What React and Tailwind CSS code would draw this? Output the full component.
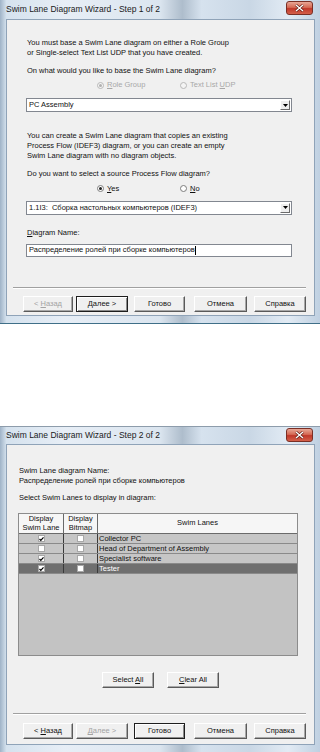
import React from 'react'

const U = ({ children }) => <span className="underline">{children}</span>

const Btn = ({ children, w = 'w-[51px]', ml = '', def = false, disabled = false }) => (
  <div
    className={`${w} ${ml} h-[16px] shrink-0 flex items-center justify-center text-[7.5px] leading-none bg-[#f0f0f0] ${
      def
        ? 'border border-[#1e1e1e] shadow-[inset_1px_1px_0_#ffffff,inset_-1px_-1px_0_#8a8a8a]'
        : 'border border-t-[#ffffff] border-l-[#ffffff] border-r-[#5a5a5a] border-b-[#5a5a5a] shadow-[inset_-1px_-1px_0_#a8a8a8]'
    } ${disabled ? 'text-[#a3a3a3]' : 'text-[#111]'}`}
  >
    <span className="whitespace-pre">{children}</span>
  </div>
)

const Radio = ({ checked = false, disabled = false, w, children }) => (
  <div className={`${w} flex items-center h-[10px]`}>
    <div
      className={`w-[7px] h-[7px] rounded-full border flex items-center justify-center ${
        disabled ? 'border-[#b8b8b8] bg-[#f4f4f4]' : 'border-[#7d7d7d] bg-white'
      }`}
    >
      {checked && (
        <div className={`w-[3px] h-[3px] rounded-full ${disabled ? 'bg-[#b0b0b0]' : 'bg-[#222]'}`} />
      )}
    </div>
    <span className={`ml-[3px] text-[7.5px] ${disabled ? 'text-[#a8a8a8]' : 'text-[#111]'}`}>{children}</span>
  </div>
)

const Combo = ({ value, mt }) => (
  <div className={`${mt} ml-[19px] w-[266px] h-[14px] bg-white border border-[#828790] flex items-center`}>
    <span className="flex-1 pl-[2px] text-[7.5px] text-[#111] truncate whitespace-pre">{value}</span>
    <div className="w-[10px] h-[10px] mr-[1px] bg-[#eeeeee] border border-t-white border-l-white border-r-[#6b6b6b] border-b-[#6b6b6b] flex items-center justify-center">
      <svg width="5" height="3" viewBox="0 0 5 3">
        <path d="M0 0h5L2.5 3z" fill="#000" />
      </svg>
    </div>
  </div>
)

const Check = ({ on }) => (
  <div className="w-[7px] h-[7px] bg-white border border-[#a8a8a8] flex items-center justify-center">
    {on && (
      <svg width="6" height="6" viewBox="0 0 6 6">
        <path d="M0.6 3l1.6 1.7L5.4 1" stroke="#000" strokeWidth="1.4" fill="none" />
      </svg>
    )}
  </div>
)

const Separator = ({ mt }) => (
  <div className={`${mt} ml-[6px] mr-[8px] border-t border-[#a0a0a0] border-b border-b-white`} />
)

const TitleBar = ({ h, title }) => (
  <div className={`${h} flex items-start shrink-0`}>
    <span className="pl-[6px] flex-1 text-[8.5px] text-[#1a1a1a] self-center leading-none">{title}</span>
    <div className="mr-[7px] mt-[1px] w-[27px] h-[14px] rounded-[3px] border border-[#7a2f25] bg-[linear-gradient(180deg,#e8a796_0%,#d56a55_45%,#c0382a_55%,#d4604a_100%)] flex items-center justify-center">
      <svg width="9" height="8" viewBox="0 0 9 8">
        <path d="M1 1l7 6M8 1L1 7" stroke="#5a1a12" strokeWidth="2.6" />
        <path d="M1 1l7 6M8 1L1 7" stroke="#ffffff" strokeWidth="1.4" />
      </svg>
    </div>
  </div>
)

const Frame = ({ className, children }) => (
  <div
    className={`${className} flex flex-col bg-[linear-gradient(90deg,#9fb3c7_0%,#d5e2ee_2%,#e7eef6_20%,#dbe5ef_50%,#aebdcc_57%,#d6e2ee_63%,#c9d7e5_78%,#e2ebf4_90%,#bfd0e1_100%)]`}
  >
    {children}
  </div>
)

const lanes = [
  { name: 'Collector PC', on: true },
  { name: 'Head of Department of Assembly', on: false },
  { name: 'Specialist software', on: true },
  { name: 'Tester', on: true, sel: true },
]

export default function App() {
  return (
    <div className="w-[320px] h-[752px] bg-white flex flex-col font-['Liberation_Sans',Arial,sans-serif] text-[#111]">
      {/* Step 1 */}
      <Frame className="h-[324px] shrink-0 border-b border-[#3f6f88]">
        <TitleBar h="h-[19px]" title="Swim Lane Diagram Wizard - Step 1 of 2" />
        <div className="ml-[6px] mr-[5px] h-[297px] bg-[#f0f0f0] border border-[#8fa3b8] flex flex-col text-[7.5px]">
          <p className="mt-[18px] ml-[20px] leading-[9.5px]">
            You must base a Swim Lane diagram on either a Role Group
            <br />
            or Single-select Text List UDP that you have created.
          </p>
          <p className="mt-[9px] ml-[20px] leading-[9.5px]">On what would you like to base the Swim Lane diagram?</p>
          <div className="mt-[4.5px] ml-[90px] flex">
            <Radio w="w-[83px]" checked disabled>
              <U>R</U>ole Group
            </Radio>
            <Radio w="w-[80px]" disabled>
              Text List <U>U</U>DP
            </Radio>
          </div>
          <Combo mt="mt-[8px]" value="PC Assembly" />
          <p className="mt-[19px] ml-[20px] leading-[10px]">
            You can create a Swim Lane diagram that copies an existing
            <br />
            Process Flow (IDEF3) diagram, or you can create an empty
            <br />
            Swim Lane diagram with no diagram objects.
          </p>
          <p className="mt-[8px] ml-[20px] leading-[9.5px]">Do you want to select a source Process Flow diagram?</p>
          <div className="mt-[5px] ml-[90px] flex">
            <Radio w="w-[83px]" checked>
              <U>Y</U>es
            </Radio>
            <Radio w="w-[80px]">
              <U>N</U>o
            </Radio>
          </div>
          <Combo mt="mt-[7px]" value="1.1I3:  Сборка настольных компьютеров (IDEF3)" />
          <p className="mt-[13.5px] ml-[20px] leading-[9.5px]">
            <U>D</U>iagram Name:
          </p>
          <div className="mt-[6px] ml-[19px] w-[266px] h-[13px] bg-white border border-[#828790] flex items-center pl-[2px]">
            <span>Распределение ролей при сборке компьютеров</span>
            <span className="w-px h-[9px] bg-black" />
          </div>
          <Separator mt="mt-[30px]" />
          <div className="mt-[7px] ml-[16px] flex">
            <Btn w="w-[50px]" disabled>
              {'< '}
              <U>Н</U>азад
            </Btn>
            <Btn w="w-[52px]" ml="ml-[3px]" def>
              <U>Д</U>
              {'алее >'}
            </Btn>
            <Btn w="w-[51px]" ml="ml-[6px]">Готово</Btn>
            <Btn w="w-[53px]" ml="ml-[9px]">Отмена</Btn>
            <Btn w="w-[52px]" ml="ml-[7px]">Справка</Btn>
          </div>
        </div>
      </Frame>

      <div className="h-[102px] shrink-0" />

      {/* Step 2 */}
      <Frame className="h-[326px] shrink-0 border-t border-[#8d9cab]">
        <TitleBar h="h-[17px]" title="Swim Lane Diagram Wizard - Step 2 of 2" />
        <div className="ml-[6px] mr-[5px] h-[301px] bg-[#f0f0f0] border border-[#8fa3b8] flex flex-col text-[7.5px]">
          <p className="mt-[21px] ml-[12px] leading-[10px]">
            Swim Lane diagram Name:
            <br />
            Распределение ролей при сборке компьютеров
          </p>
          <p className="mt-[7px] ml-[12px] leading-[10px]">Select Swim Lanes to display in diagram:</p>
          <div className="mt-[10px] ml-[11px] w-[280px] h-[143px] bg-[#c3c3c3] border border-[#8c8c8c] flex flex-col">
            <div className="h-[20px] flex bg-[#f6f6f6] border-b border-[#6a6a6a] leading-[8.5px] text-[7.5px]">
              <div className="w-[45px] border-r border-[#6a6a6a] flex flex-col items-center justify-center">
                <span>Display</span>
                <span>Swim Lane</span>
              </div>
              <div className="w-[34px] border-r border-[#6a6a6a] flex flex-col items-center justify-center">
                <span>Display</span>
                <span>Bitmap</span>
              </div>
              <div className="flex-1 flex items-center justify-center">Swim Lanes</div>
            </div>
            {lanes.map((l) => (
              <div
                key={l.name}
                className={`h-[10px] flex border-b border-[#8a8a8a] ${l.sel ? 'bg-[#6f6f6f] text-white' : 'bg-[#c6c6c6] text-[#111]'}`}
              >
                <div className="w-[45px] border-r border-[#3a3a3a] flex items-center justify-center">
                  <Check on={l.on} />
                </div>
                <div className="w-[34px] border-r border-[#3a3a3a] flex items-center justify-center">
                  <Check on={false} />
                </div>
                <div className="flex-1 pl-[1px] flex items-center text-[7.5px] leading-none">{l.name}</div>
              </div>
            ))}
          </div>
          <div className="mt-[16px] flex justify-center gap-[13px]">
            <Btn w="w-[52px]">
              {'Select '}
              <U>A</U>ll
            </Btn>
            <Btn w="w-[52px]">
              <U>C</U>
              {'lear All'}
            </Btn>
          </div>
          <Separator mt="mt-[25px]" />
          <div className="mt-[8px] ml-[16px] flex">
            <Btn w="w-[50px]">
              {'< '}
              <U>Н</U>азад
            </Btn>
            <Btn w="w-[52px]" ml="ml-[3px]" disabled>
              <U>Д</U>
              {'алее >'}
            </Btn>
            <Btn w="w-[51px]" ml="ml-[6px]" def>
              Готово
            </Btn>
            <Btn w="w-[53px]" ml="ml-[9px]">Отмена</Btn>
            <Btn w="w-[52px]" ml="ml-[7px]">Справка</Btn>
          </div>
        </div>
      </Frame>
    </div>
  )
}
